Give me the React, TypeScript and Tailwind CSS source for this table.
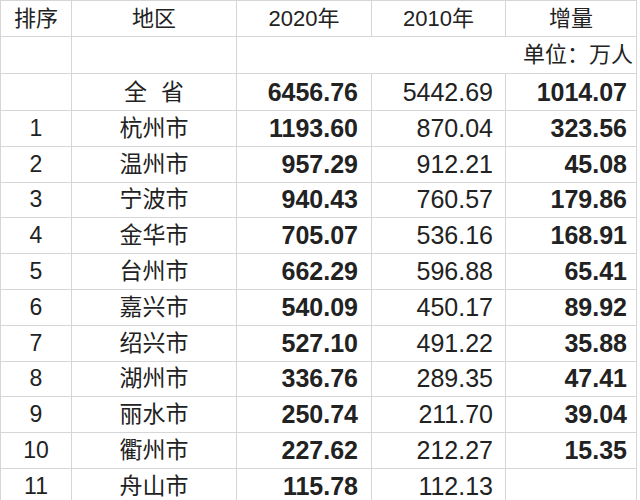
const rows = [
  { rank: '1', city: '杭州市', y2020: '1193.60', y2010: '870.04', diff: '323.56' },
  { rank: '2', city: '温州市', y2020: '957.29', y2010: '912.21', diff: '45.08' },
  { rank: '3', city: '宁波市', y2020: '940.43', y2010: '760.57', diff: '179.86' },
  { rank: '4', city: '金华市', y2020: '705.07', y2010: '536.16', diff: '168.91' },
  { rank: '5', city: '台州市', y2020: '662.29', y2010: '596.88', diff: '65.41' },
  { rank: '6', city: '嘉兴市', y2020: '540.09', y2010: '450.17', diff: '89.92' },
  { rank: '7', city: '绍兴市', y2020: '527.10', y2010: '491.22', diff: '35.88' },
  { rank: '8', city: '湖州市', y2020: '336.76', y2010: '289.35', diff: '47.41' },
  { rank: '9', city: '丽水市', y2020: '250.74', y2010: '211.70', diff: '39.04' },
  { rank: '10', city: '衢州市', y2020: '227.62', y2010: '212.27', diff: '15.35' },
  { rank: '11', city: '舟山市', y2020: '115.78', y2010: '112.13', diff: '' },
];

const cell = 'flex items-center leading-none border-r border-b border-[#d6d6d6]';

export default function App() {
  return (
    <div
      className="h-[500px] w-[640px] overflow-hidden bg-white text-[#222]"
      style={{ fontFamily: "'Liberation Sans', 'Noto Sans CJK SC', sans-serif" }}
    >
      <div className="grid w-[637px] grid-cols-[71px_165px_135px_134px_131px] grid-rows-[36px_37px_37px] auto-rows-[35.8px] border-l border-t border-[#d6d6d6]">
        {/* header */}
        <div className={`${cell} justify-center text-[22px]`}>排序</div>
        <div className={`${cell} justify-center text-[22px]`}>地区</div>
        <div className={`${cell} justify-center text-[22px]`}>2020年</div>
        <div className={`${cell} justify-center text-[22px]`}>2010年</div>
        <div className={`${cell} justify-center text-[22px]`}>增量</div>

        {/* unit row */}
        <div className={cell} />
        <div className={cell} />
        <div className={`${cell} col-span-3 justify-end pr-[3px] text-[22px]`}>单位：万人</div>

        {/* province total */}
        <div className={cell} />
        <div className={`${cell} justify-center pl-[14px] text-[23px] tracking-[14px]`}>全省</div>
        <div className={`${cell} justify-end pr-[13px] text-[25px] font-bold`}>6456.76</div>
        <div className={`${cell} justify-end pr-[12px] text-[25px]`}>5442.69</div>
        <div className={`${cell} justify-end pr-[9px] text-[25px] font-bold`}>1014.07</div>

        {rows.map((r) => (
          <div key={r.rank} className="contents">
            <div className={`${cell} justify-center text-[23px]`}>{r.rank}</div>
            <div className={`${cell} justify-center text-[23px]`}>{r.city}</div>
            <div className={`${cell} justify-end pr-[13px] text-[25px] font-bold`}>{r.y2020}</div>
            <div className={`${cell} justify-end pr-[12px] text-[25px]`}>{r.y2010}</div>
            <div className={`${cell} justify-end pr-[9px] text-[25px] font-bold`}>{r.diff}</div>
          </div>
        ))}
      </div>
    </div>
  );
}
